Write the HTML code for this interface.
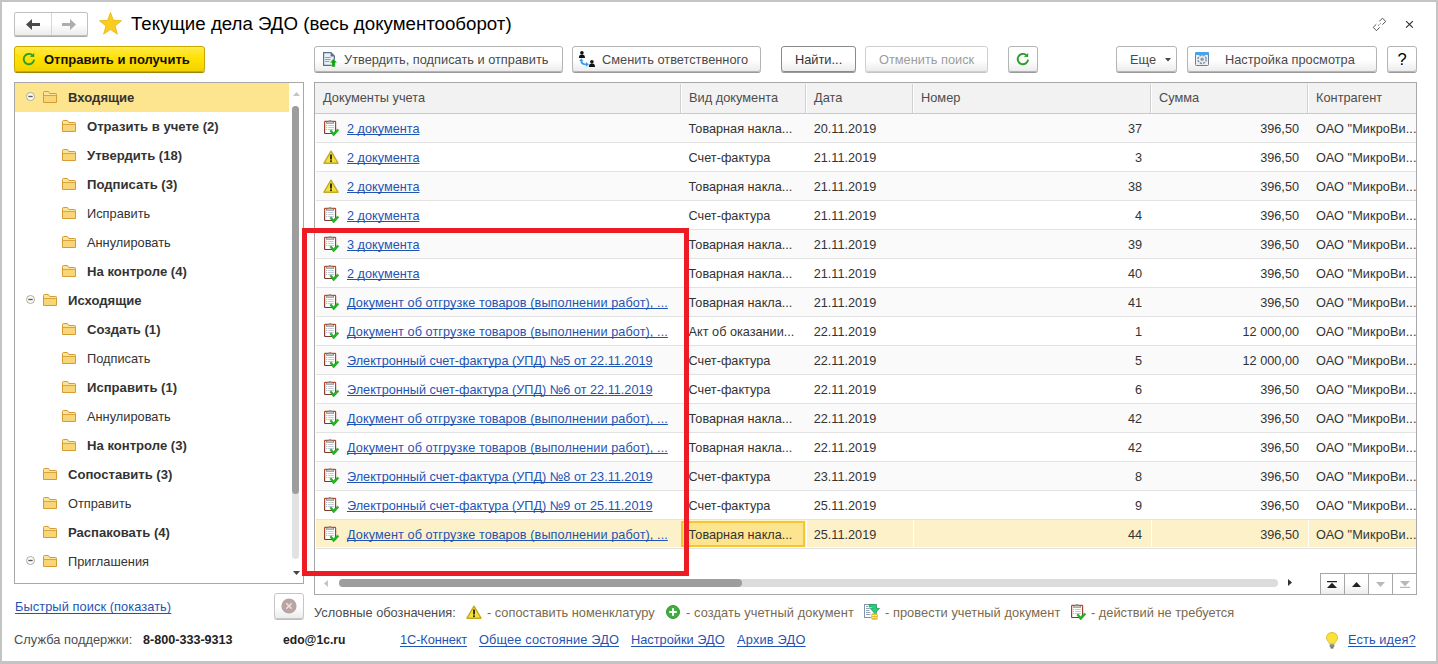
<!DOCTYPE html>
<html lang="ru"><head><meta charset="utf-8"><title>Текущие дела ЭДО</title>
<style>
*{box-sizing:border-box;margin:0;padding:0}
html,body{width:1438px;height:664px;overflow:hidden;background:#fff}
body{font-family:"Liberation Sans",sans-serif;font-size:12.8px;color:#333;position:relative}
.abs{position:absolute;white-space:nowrap}
.frame{position:absolute;left:0;top:0;width:1438px;height:664px;border-style:solid;border-color:#c4c4c4;border-width:2px 2px 3px 2px;z-index:50;pointer-events:none}
.btn{position:absolute;top:46px;height:26px;border:1px solid #b4b4b4;border-radius:3px;background:linear-gradient(#ffffff,#ffffff 55%,#ececec);box-shadow:0 1px 0 #9a9a9a;color:#4a4a4a;line-height:26px;white-space:nowrap}
.btn span{position:absolute;top:0}
.t{position:absolute;left:0;width:274px;height:29px;line-height:29px;white-space:nowrap}
.t b,.t i{position:absolute;top:0;font-style:normal}
.t b{font-weight:bold;font-size:13.1px}
.row{position:absolute;left:1px;width:1101px;height:29px;border-bottom:1px solid #e2e2e2;line-height:30px;font-size:12.7px}
.row.odd{background:#fafafa}
.row span{position:absolute;top:0;white-space:nowrap}
.row a{position:absolute;top:0;left:31px;color:#1f54b4;text-decoration:underline;text-decoration-skip-ink:none;text-underline-offset:1px;text-decoration-thickness:1px;white-space:nowrap}
.lk{color:#1f54b4;text-decoration:underline;text-decoration-skip-ink:none;text-underline-offset:2px;text-decoration-thickness:1px}
.num{text-align:right}
.hd{position:absolute;top:0;height:30px;line-height:29px;color:#4d4d4d;white-space:nowrap}
.sep{position:absolute;top:1px;width:2px;height:29px;border-left:1px solid #d0d0d0;background:#fff}
svg{position:absolute;overflow:visible}
</style></head>
<body>
<div class="frame"></div>
<svg width="0" height="0" style="left:0;top:0"><defs><linearGradient id="bg" x1="0" y1="0" x2="0" y2="1"><stop offset="0" stop-color="#bb4a26"/><stop offset="1" stop-color="#7a3a33"/></linearGradient></defs></svg>
<div class="abs" style="left:14px;top:12px;width:74px;height:24px;border:1px solid #c0c0c0;border-radius:2px;background:linear-gradient(#fff,#fff 50%,#ececec);box-shadow:0 1px 0 #aaa"></div>
<div class="abs" style="left:51px;top:13px;width:1px;height:22px;background:#d6d6d6"></div>
<svg style="left:25px;top:18px" width="16" height="13" viewBox="0 0 16 13"><path d="M1 6.5 L7 1 L7 5 L15 5 L15 8 L7 8 L7 12 Z" fill="#4a4a4a"/></svg>
<svg style="left:61px;top:18px" width="16" height="13" viewBox="0 0 16 13"><path d="M15 6.5 L9 1 L9 5 L1 5 L1 8 L9 8 L9 12 Z" fill="#adadad"/></svg>
<svg style="left:99px;top:12px" width="23" height="23" viewBox="0 0 24 23" preserveAspectRatio="none"><path d="M12 0.5 L15 8.3 L23.5 8.7 L16.8 14 L19.2 22.2 L12 17.5 L4.8 22.2 L7.2 14 L0.5 8.7 L9 8.3 Z" fill="#f9cc1d" stroke="#e9b50d" stroke-width="0.8"/></svg>
<div class="abs" style="left:131px;top:12px;font-size:18.7px;line-height:24px;color:#000">Текущие дела ЭДО (весь документооборот)</div>
<svg style="left:1370px;top:15px" width="20" height="20" viewBox="0 0 20 20"><g fill="none" stroke="#555" stroke-width="1"><path d="M6.3 9.3 L3.2 12.3 L6.5 15.7 L9.7 12.3"/><path d="M9.3 6.4 L12.4 3.2 L15.8 6.4 L12.4 9.6"/><path d="M8.2 10.6 L10.8 8.3" stroke-dasharray="1.2 0.8"/></g></svg>
<svg style="left:1405px;top:20px" width="9" height="9" viewBox="0 0 9 9"><path d="M1.1 1.2 L7.8 7.7 M7.8 1.2 L1.1 7.7" stroke="#2e2e2e" stroke-width="1.15" fill="none"/></svg>
<div class="abs" style="left:14px;top:46px;width:191px;height:26px;border:1px solid #c9a800;border-radius:3px;background:linear-gradient(#ffe94a,#ffe100 50%,#f2d200);box-shadow:0 1px 0 #9c8600"></div>
<svg style="left:22px;top:52px" width="14" height="14" viewBox="0 0 14 14"><path d="M10.24 3.12 A5.2 5.2 0 1 0 12.08 7.55" fill="none" stroke="#27a027" stroke-width="1.9"/><path d="M12.2 1.1 V5.1 L7.8 4.8 Z" fill="#27a027"/></svg>
<div class="abs" style="left:44px;top:46px;line-height:28px;font-size:13px;font-weight:bold;color:#111">Отправить и получить</div>
<div class="btn" style="left:314px;width:249px;"><svg style="left:8px;top:5px" width="15" height="15" viewBox="0 0 15 15"><path d="M0.6 0.6 H8 L11.4 4 V13.4 H0.6 Z" fill="#e8f0f8" stroke="#5f6f86" stroke-width="1.2"/><path d="M7.6 0.6 V4.4 H11.4 Z" fill="#5f6f86"/><path d="M2.1 5.5 H7.6 M2.1 7.5 H7.6 M2.1 9.5 H6.4" stroke="#8f9db0" stroke-width="1"/><path d="M10.5 6.6 L14.2 10.8 H12.2 V14.9 H8.8 V10.8 H6.8 Z" fill="#12a012" stroke="#fff" stroke-width="0.4"/></svg><span style="left:29px">Утвердить, подписать и отправить</span></div>
<div class="btn" style="left:572px;width:189px;"><svg style="left:5px;top:4px" width="18" height="17" viewBox="0 0 18 17"><circle cx="3.9" cy="1.8" r="1.8" fill="#111"/><path d="M0.8 6.9 Q0.8 4 3 3.6 H4.8 Q7.1 4 7.1 6.9 Z" fill="#111"/><circle cx="13.9" cy="10.7" r="1.8" fill="#111"/><path d="M10.8 15.9 Q10.8 13 13 12.6 H14.8 Q17.1 13 17.1 15.9 Z" fill="#111"/><path d="M3.3 9.4 Q3.4 13.4 8.3 13.4" fill="none" stroke="#3b9bf0" stroke-width="1.8"/><path d="M3.3 7.2 L5.4 9.9 H1.2 Z" fill="#3b9bf0"/><path d="M10.9 13.4 L8 11.1 V15.8 Z" fill="#3b9bf0"/></svg><span style="left:29px">Сменить ответственного</span></div>
<div class="btn" style="left:781px;width:75px;border-color:#8a8a8a;color:#333"><span style="left:13px">Найти...</span></div>
<div class="btn" style="left:865px;width:123px;border-color:#cfcfcf;box-shadow:0 1px 0 #c4c4c4"><span style="left:13px;color:#9c9c9c">Отменить поиск</span></div>
<div class="btn" style="left:1008px;width:30px;"><svg style="left:7px;top:5px" width="14" height="14" viewBox="0 0 14 14"><path d="M10.24 3.12 A5.2 5.2 0 1 0 12.08 7.55" fill="none" stroke="#27a027" stroke-width="1.9"/><path d="M12.2 1.1 V5.1 L7.8 4.8 Z" fill="#27a027"/></svg></div>
<div class="btn" style="left:1116px;width:61px;"><span style="left:13px">Еще</span><svg style="left:48px;top:11px" width="6" height="4" viewBox="0 0 6 4"><path d="M0 0 H6 L3 3.5 Z" fill="#444"/></svg></div>
<div class="btn" style="left:1187px;width:190px;"><svg style="left:7px;top:5px" width="14" height="14" viewBox="0 0 14 14"><rect x="0.5" y="0.5" width="13" height="13" rx="1" fill="#eceff2" stroke="#6b7f96"/><path d="M0 3 V1.2 Q0 0 1.2 0 H12.8 Q14 0 14 1.2 V3 Z" fill="#46a3ee"/><circle cx="7.1" cy="7.3" r="4.1" fill="none" stroke="#8593a1" stroke-width="1.5" stroke-dasharray="2.2 1"/><circle cx="7.1" cy="7.3" r="1.7" fill="#8c99a6"/></svg><span style="left:37px">Настройка просмотра</span></div>
<div class="btn" style="left:1387px;width:30px;"><span style="left:0;width:28px;text-align:center;font-size:16.5px;line-height:24px;color:#000">?</span></div>
<div class="abs" style="left:14px;top:82px;width:290px;height:502px;border:1px solid #a8a8a8;background:#fff">
<div class="abs" style="left:0;top:0;width:274px;height:29px;background:#fde48e"></div>
<div class="t" style="top:0px"><svg style="left:10px;top:8px" width="11" height="11" viewBox="0 0 11 11"><circle cx="5.5" cy="5.5" r="4" fill="#fffdf4" stroke="#a3a3a3" stroke-width="0.9"/><path d="M3.3 5.5 H7.7" stroke="#5a5a5a" stroke-width="1.4"/></svg><svg style="left:28px;top:8px" width="14" height="12" viewBox="0 0 14 12"><path d="M0.5 11.5 V1.5 Q0.5 0.5 1.5 0.5 H5 Q5.8 0.5 6.2 1.3 L6.8 2.5 H12.7 Q13.5 2.5 13.5 3.3 V11.5 Z" fill="#fbe39a" stroke="#d59c33"/><rect x="1" y="5" width="12" height="6" fill="#f8d678"/><path d="M1 4.5 H13" stroke="#d9a540" stroke-width="1"/></svg><b style="left:53px">Входящие</b></div>
<div class="t" style="top:29px"><svg style="left:47px;top:8px" width="14" height="12" viewBox="0 0 14 12"><path d="M0.5 11.5 V1.5 Q0.5 0.5 1.5 0.5 H5 Q5.8 0.5 6.2 1.3 L6.8 2.5 H12.7 Q13.5 2.5 13.5 3.3 V11.5 Z" fill="#fbe39a" stroke="#d59c33"/><rect x="1" y="5" width="12" height="6" fill="#f8d678"/><path d="M1 4.5 H13" stroke="#d9a540" stroke-width="1"/></svg><b style="left:72px">Отразить в учете (2)</b></div>
<div class="t" style="top:58px"><svg style="left:47px;top:8px" width="14" height="12" viewBox="0 0 14 12"><path d="M0.5 11.5 V1.5 Q0.5 0.5 1.5 0.5 H5 Q5.8 0.5 6.2 1.3 L6.8 2.5 H12.7 Q13.5 2.5 13.5 3.3 V11.5 Z" fill="#fbe39a" stroke="#d59c33"/><rect x="1" y="5" width="12" height="6" fill="#f8d678"/><path d="M1 4.5 H13" stroke="#d9a540" stroke-width="1"/></svg><b style="left:72px">Утвердить (18)</b></div>
<div class="t" style="top:87px"><svg style="left:47px;top:8px" width="14" height="12" viewBox="0 0 14 12"><path d="M0.5 11.5 V1.5 Q0.5 0.5 1.5 0.5 H5 Q5.8 0.5 6.2 1.3 L6.8 2.5 H12.7 Q13.5 2.5 13.5 3.3 V11.5 Z" fill="#fbe39a" stroke="#d59c33"/><rect x="1" y="5" width="12" height="6" fill="#f8d678"/><path d="M1 4.5 H13" stroke="#d9a540" stroke-width="1"/></svg><b style="left:72px">Подписать (3)</b></div>
<div class="t" style="top:116px"><svg style="left:47px;top:8px" width="14" height="12" viewBox="0 0 14 12"><path d="M0.5 11.5 V1.5 Q0.5 0.5 1.5 0.5 H5 Q5.8 0.5 6.2 1.3 L6.8 2.5 H12.7 Q13.5 2.5 13.5 3.3 V11.5 Z" fill="#fbe39a" stroke="#d59c33"/><rect x="1" y="5" width="12" height="6" fill="#f8d678"/><path d="M1 4.5 H13" stroke="#d9a540" stroke-width="1"/></svg><i style="left:72px">Исправить</i></div>
<div class="t" style="top:145px"><svg style="left:47px;top:8px" width="14" height="12" viewBox="0 0 14 12"><path d="M0.5 11.5 V1.5 Q0.5 0.5 1.5 0.5 H5 Q5.8 0.5 6.2 1.3 L6.8 2.5 H12.7 Q13.5 2.5 13.5 3.3 V11.5 Z" fill="#fbe39a" stroke="#d59c33"/><rect x="1" y="5" width="12" height="6" fill="#f8d678"/><path d="M1 4.5 H13" stroke="#d9a540" stroke-width="1"/></svg><i style="left:72px">Аннулировать</i></div>
<div class="t" style="top:174px"><svg style="left:47px;top:8px" width="14" height="12" viewBox="0 0 14 12"><path d="M0.5 11.5 V1.5 Q0.5 0.5 1.5 0.5 H5 Q5.8 0.5 6.2 1.3 L6.8 2.5 H12.7 Q13.5 2.5 13.5 3.3 V11.5 Z" fill="#fbe39a" stroke="#d59c33"/><rect x="1" y="5" width="12" height="6" fill="#f8d678"/><path d="M1 4.5 H13" stroke="#d9a540" stroke-width="1"/></svg><b style="left:72px">На контроле (4)</b></div>
<div class="t" style="top:203px"><svg style="left:10px;top:8px" width="11" height="11" viewBox="0 0 11 11"><circle cx="5.5" cy="5.5" r="4" fill="#fffdf4" stroke="#a3a3a3" stroke-width="0.9"/><path d="M3.3 5.5 H7.7" stroke="#5a5a5a" stroke-width="1.4"/></svg><svg style="left:28px;top:8px" width="14" height="12" viewBox="0 0 14 12"><path d="M0.5 11.5 V1.5 Q0.5 0.5 1.5 0.5 H5 Q5.8 0.5 6.2 1.3 L6.8 2.5 H12.7 Q13.5 2.5 13.5 3.3 V11.5 Z" fill="#fbe39a" stroke="#d59c33"/><rect x="1" y="5" width="12" height="6" fill="#f8d678"/><path d="M1 4.5 H13" stroke="#d9a540" stroke-width="1"/></svg><b style="left:53px">Исходящие</b></div>
<div class="t" style="top:232px"><svg style="left:47px;top:8px" width="14" height="12" viewBox="0 0 14 12"><path d="M0.5 11.5 V1.5 Q0.5 0.5 1.5 0.5 H5 Q5.8 0.5 6.2 1.3 L6.8 2.5 H12.7 Q13.5 2.5 13.5 3.3 V11.5 Z" fill="#fbe39a" stroke="#d59c33"/><rect x="1" y="5" width="12" height="6" fill="#f8d678"/><path d="M1 4.5 H13" stroke="#d9a540" stroke-width="1"/></svg><b style="left:72px">Создать (1)</b></div>
<div class="t" style="top:261px"><svg style="left:47px;top:8px" width="14" height="12" viewBox="0 0 14 12"><path d="M0.5 11.5 V1.5 Q0.5 0.5 1.5 0.5 H5 Q5.8 0.5 6.2 1.3 L6.8 2.5 H12.7 Q13.5 2.5 13.5 3.3 V11.5 Z" fill="#fbe39a" stroke="#d59c33"/><rect x="1" y="5" width="12" height="6" fill="#f8d678"/><path d="M1 4.5 H13" stroke="#d9a540" stroke-width="1"/></svg><i style="left:72px">Подписать</i></div>
<div class="t" style="top:290px"><svg style="left:47px;top:8px" width="14" height="12" viewBox="0 0 14 12"><path d="M0.5 11.5 V1.5 Q0.5 0.5 1.5 0.5 H5 Q5.8 0.5 6.2 1.3 L6.8 2.5 H12.7 Q13.5 2.5 13.5 3.3 V11.5 Z" fill="#fbe39a" stroke="#d59c33"/><rect x="1" y="5" width="12" height="6" fill="#f8d678"/><path d="M1 4.5 H13" stroke="#d9a540" stroke-width="1"/></svg><b style="left:72px">Исправить (1)</b></div>
<div class="t" style="top:319px"><svg style="left:47px;top:8px" width="14" height="12" viewBox="0 0 14 12"><path d="M0.5 11.5 V1.5 Q0.5 0.5 1.5 0.5 H5 Q5.8 0.5 6.2 1.3 L6.8 2.5 H12.7 Q13.5 2.5 13.5 3.3 V11.5 Z" fill="#fbe39a" stroke="#d59c33"/><rect x="1" y="5" width="12" height="6" fill="#f8d678"/><path d="M1 4.5 H13" stroke="#d9a540" stroke-width="1"/></svg><i style="left:72px">Аннулировать</i></div>
<div class="t" style="top:348px"><svg style="left:47px;top:8px" width="14" height="12" viewBox="0 0 14 12"><path d="M0.5 11.5 V1.5 Q0.5 0.5 1.5 0.5 H5 Q5.8 0.5 6.2 1.3 L6.8 2.5 H12.7 Q13.5 2.5 13.5 3.3 V11.5 Z" fill="#fbe39a" stroke="#d59c33"/><rect x="1" y="5" width="12" height="6" fill="#f8d678"/><path d="M1 4.5 H13" stroke="#d9a540" stroke-width="1"/></svg><b style="left:72px">На контроле (3)</b></div>
<div class="t" style="top:377px"><svg style="left:28px;top:8px" width="14" height="12" viewBox="0 0 14 12"><path d="M0.5 11.5 V1.5 Q0.5 0.5 1.5 0.5 H5 Q5.8 0.5 6.2 1.3 L6.8 2.5 H12.7 Q13.5 2.5 13.5 3.3 V11.5 Z" fill="#fbe39a" stroke="#d59c33"/><rect x="1" y="5" width="12" height="6" fill="#f8d678"/><path d="M1 4.5 H13" stroke="#d9a540" stroke-width="1"/></svg><b style="left:53px">Сопоставить (3)</b></div>
<div class="t" style="top:406px"><svg style="left:28px;top:8px" width="14" height="12" viewBox="0 0 14 12"><path d="M0.5 11.5 V1.5 Q0.5 0.5 1.5 0.5 H5 Q5.8 0.5 6.2 1.3 L6.8 2.5 H12.7 Q13.5 2.5 13.5 3.3 V11.5 Z" fill="#fbe39a" stroke="#d59c33"/><rect x="1" y="5" width="12" height="6" fill="#f8d678"/><path d="M1 4.5 H13" stroke="#d9a540" stroke-width="1"/></svg><i style="left:53px">Отправить</i></div>
<div class="t" style="top:435px"><svg style="left:28px;top:8px" width="14" height="12" viewBox="0 0 14 12"><path d="M0.5 11.5 V1.5 Q0.5 0.5 1.5 0.5 H5 Q5.8 0.5 6.2 1.3 L6.8 2.5 H12.7 Q13.5 2.5 13.5 3.3 V11.5 Z" fill="#fbe39a" stroke="#d59c33"/><rect x="1" y="5" width="12" height="6" fill="#f8d678"/><path d="M1 4.5 H13" stroke="#d9a540" stroke-width="1"/></svg><b style="left:53px">Распаковать (4)</b></div>
<div class="t" style="top:464px"><svg style="left:10px;top:8px" width="11" height="11" viewBox="0 0 11 11"><circle cx="5.5" cy="5.5" r="4" fill="#fffdf4" stroke="#a3a3a3" stroke-width="0.9"/><path d="M3.3 5.5 H7.7" stroke="#5a5a5a" stroke-width="1.4"/></svg><svg style="left:28px;top:8px" width="14" height="12" viewBox="0 0 14 12"><path d="M0.5 11.5 V1.5 Q0.5 0.5 1.5 0.5 H5 Q5.8 0.5 6.2 1.3 L6.8 2.5 H12.7 Q13.5 2.5 13.5 3.3 V11.5 Z" fill="#fbe39a" stroke="#d59c33"/><rect x="1" y="5" width="12" height="6" fill="#f8d678"/><path d="M1 4.5 H13" stroke="#d9a540" stroke-width="1"/></svg><i style="left:53px">Приглашения</i></div>
<svg style="left:277.5px;top:9px" width="7" height="4" viewBox="0 0 7 4"><path d="M3.5 0 L7 4 H0 Z" fill="#c4c4c4"/></svg>
<div class="abs" style="left:277px;top:23px;width:7px;height:453px;background:#e2e2e2;border-radius:4px"></div>
<div class="abs" style="left:277px;top:23px;width:7px;height:388px;background:#9d9d9d;border-radius:4px"></div>
<svg style="left:277.5px;top:488px" width="7" height="4" viewBox="0 0 7 4"><path d="M3.5 4 L7 0 H0 Z" fill="#444"/></svg>
</div>
<div class="abs" style="left:314px;top:82px;width:1103px;height:513px;border:1px solid #a8a8a8;background:#fff;overflow:hidden">
<div class="abs" style="left:0;top:0;width:1101px;height:31px;background:#f2f2f2;border-bottom:1px solid #c9c9c9"></div>
<div class="hd" style="left:8px">Документы учета</div>
<div class="sep" style="left:365px"></div>
<div class="hd" style="left:374px">Вид документа</div>
<div class="sep" style="left:490px"></div>
<div class="hd" style="left:499px">Дата</div>
<div class="sep" style="left:597px"></div>
<div class="hd" style="left:606px">Номер</div>
<div class="sep" style="left:835px"></div>
<div class="hd" style="left:844px">Сумма</div>
<div class="sep" style="left:992px"></div>
<div class="hd" style="left:1001px">Контрагент</div>
<div class="row odd" style="top:31px"><svg style="left:8px;top:6px" width="16" height="17" viewBox="0 0 16 17"><rect x="0.6" y="1.4" width="11" height="12.1" rx="0.5" fill="#fff" stroke="url(#bg)" stroke-width="1.2"/><path d="M2.1 3.7 V1.8 H4.2 Q4.4 0 6 0 Q7.7 0 7.9 1.8 H10 V3.7 Z" fill="#8e8e8e"/><path d="M3 2.5 H9" stroke="#c4c4c4" stroke-width="1"/><path d="M2.2 5.5 H3.2 M2.2 7.5 H3.2 M2.2 9.5 H3.2" stroke="#9fb0c0" stroke-width="1"/><path d="M4.2 5.5 H9.8 M4.2 7.5 H9.8 M4.2 9.5 H9.8" stroke="#c3cad2" stroke-width="1"/><path d="M5.9 10.9 L7.3 9.9 L9.4 12.7 L13.3 9.2 L14.9 10.2 L9.6 16 Z" fill="#22b822" stroke="#0f8f0f" stroke-width="0.5" stroke-linejoin="round"/></svg><a>2 документа</a><span style="left:372.6px">Товарная накла...</span><span style="left:497.7px">20.11.2019</span><span class="num" style="left:598px;width:228px">37</span><span class="num" style="left:835px;width:148px">396,50</span><span style="left:1000px;letter-spacing:0.1px">ОАО "МикроВи...</span></div>
<div class="row" style="top:60px"><svg style="left:7px;top:7px" width="16" height="15" viewBox="0 0 16 15"><path d="M8 1.2 L15 13.2 H1 Z" fill="#f5e13c" stroke="#c4aa22" stroke-width="1.4" stroke-linejoin="round"/><path d="M8 4.4 V9.4" stroke="#2a2a10" stroke-width="1.9"/><rect x="7.1" y="10.3" width="1.8" height="1.8" fill="#2a2a10"/></svg><a>2 документа</a><span style="left:372.6px">Счет-фактура</span><span style="left:497.7px">21.11.2019</span><span class="num" style="left:598px;width:228px">3</span><span class="num" style="left:835px;width:148px">396,50</span><span style="left:1000px;letter-spacing:0.1px">ОАО "МикроВи...</span></div>
<div class="row odd" style="top:89px"><svg style="left:7px;top:7px" width="16" height="15" viewBox="0 0 16 15"><path d="M8 1.2 L15 13.2 H1 Z" fill="#f5e13c" stroke="#c4aa22" stroke-width="1.4" stroke-linejoin="round"/><path d="M8 4.4 V9.4" stroke="#2a2a10" stroke-width="1.9"/><rect x="7.1" y="10.3" width="1.8" height="1.8" fill="#2a2a10"/></svg><a>2 документа</a><span style="left:372.6px">Товарная накла...</span><span style="left:497.7px">21.11.2019</span><span class="num" style="left:598px;width:228px">38</span><span class="num" style="left:835px;width:148px">396,50</span><span style="left:1000px;letter-spacing:0.1px">ОАО "МикроВи...</span></div>
<div class="row" style="top:118px"><svg style="left:8px;top:6px" width="16" height="17" viewBox="0 0 16 17"><rect x="0.6" y="1.4" width="11" height="12.1" rx="0.5" fill="#fff" stroke="url(#bg)" stroke-width="1.2"/><path d="M2.1 3.7 V1.8 H4.2 Q4.4 0 6 0 Q7.7 0 7.9 1.8 H10 V3.7 Z" fill="#8e8e8e"/><path d="M3 2.5 H9" stroke="#c4c4c4" stroke-width="1"/><path d="M2.2 5.5 H3.2 M2.2 7.5 H3.2 M2.2 9.5 H3.2" stroke="#9fb0c0" stroke-width="1"/><path d="M4.2 5.5 H9.8 M4.2 7.5 H9.8 M4.2 9.5 H9.8" stroke="#c3cad2" stroke-width="1"/><path d="M5.9 10.9 L7.3 9.9 L9.4 12.7 L13.3 9.2 L14.9 10.2 L9.6 16 Z" fill="#22b822" stroke="#0f8f0f" stroke-width="0.5" stroke-linejoin="round"/></svg><a>2 документа</a><span style="left:372.6px">Счет-фактура</span><span style="left:497.7px">21.11.2019</span><span class="num" style="left:598px;width:228px">4</span><span class="num" style="left:835px;width:148px">396,50</span><span style="left:1000px;letter-spacing:0.1px">ОАО "МикроВи...</span></div>
<div class="row odd" style="top:147px"><svg style="left:8px;top:6px" width="16" height="17" viewBox="0 0 16 17"><rect x="0.6" y="1.4" width="11" height="12.1" rx="0.5" fill="#fff" stroke="url(#bg)" stroke-width="1.2"/><path d="M2.1 3.7 V1.8 H4.2 Q4.4 0 6 0 Q7.7 0 7.9 1.8 H10 V3.7 Z" fill="#8e8e8e"/><path d="M3 2.5 H9" stroke="#c4c4c4" stroke-width="1"/><path d="M2.2 5.5 H3.2 M2.2 7.5 H3.2 M2.2 9.5 H3.2" stroke="#9fb0c0" stroke-width="1"/><path d="M4.2 5.5 H9.8 M4.2 7.5 H9.8 M4.2 9.5 H9.8" stroke="#c3cad2" stroke-width="1"/><path d="M5.9 10.9 L7.3 9.9 L9.4 12.7 L13.3 9.2 L14.9 10.2 L9.6 16 Z" fill="#22b822" stroke="#0f8f0f" stroke-width="0.5" stroke-linejoin="round"/></svg><a>3 документа</a><span style="left:372.6px">Товарная накла...</span><span style="left:497.7px">21.11.2019</span><span class="num" style="left:598px;width:228px">39</span><span class="num" style="left:835px;width:148px">396,50</span><span style="left:1000px;letter-spacing:0.1px">ОАО "МикроВи...</span></div>
<div class="row" style="top:176px"><svg style="left:8px;top:6px" width="16" height="17" viewBox="0 0 16 17"><rect x="0.6" y="1.4" width="11" height="12.1" rx="0.5" fill="#fff" stroke="url(#bg)" stroke-width="1.2"/><path d="M2.1 3.7 V1.8 H4.2 Q4.4 0 6 0 Q7.7 0 7.9 1.8 H10 V3.7 Z" fill="#8e8e8e"/><path d="M3 2.5 H9" stroke="#c4c4c4" stroke-width="1"/><path d="M2.2 5.5 H3.2 M2.2 7.5 H3.2 M2.2 9.5 H3.2" stroke="#9fb0c0" stroke-width="1"/><path d="M4.2 5.5 H9.8 M4.2 7.5 H9.8 M4.2 9.5 H9.8" stroke="#c3cad2" stroke-width="1"/><path d="M5.9 10.9 L7.3 9.9 L9.4 12.7 L13.3 9.2 L14.9 10.2 L9.6 16 Z" fill="#22b822" stroke="#0f8f0f" stroke-width="0.5" stroke-linejoin="round"/></svg><a>2 документа</a><span style="left:372.6px">Товарная накла...</span><span style="left:497.7px">21.11.2019</span><span class="num" style="left:598px;width:228px">40</span><span class="num" style="left:835px;width:148px">396,50</span><span style="left:1000px;letter-spacing:0.1px">ОАО "МикроВи...</span></div>
<div class="row odd" style="top:205px"><svg style="left:8px;top:6px" width="16" height="17" viewBox="0 0 16 17"><rect x="0.6" y="1.4" width="11" height="12.1" rx="0.5" fill="#fff" stroke="url(#bg)" stroke-width="1.2"/><path d="M2.1 3.7 V1.8 H4.2 Q4.4 0 6 0 Q7.7 0 7.9 1.8 H10 V3.7 Z" fill="#8e8e8e"/><path d="M3 2.5 H9" stroke="#c4c4c4" stroke-width="1"/><path d="M2.2 5.5 H3.2 M2.2 7.5 H3.2 M2.2 9.5 H3.2" stroke="#9fb0c0" stroke-width="1"/><path d="M4.2 5.5 H9.8 M4.2 7.5 H9.8 M4.2 9.5 H9.8" stroke="#c3cad2" stroke-width="1"/><path d="M5.9 10.9 L7.3 9.9 L9.4 12.7 L13.3 9.2 L14.9 10.2 L9.6 16 Z" fill="#22b822" stroke="#0f8f0f" stroke-width="0.5" stroke-linejoin="round"/></svg><a style="letter-spacing:0.08px">Документ об отгрузке товаров (выполнении работ), ...</a><span style="left:372.6px">Товарная накла...</span><span style="left:497.7px">21.11.2019</span><span class="num" style="left:598px;width:228px">41</span><span class="num" style="left:835px;width:148px">396,50</span><span style="left:1000px;letter-spacing:0.1px">ОАО "МикроВи...</span></div>
<div class="row" style="top:234px"><svg style="left:8px;top:6px" width="16" height="17" viewBox="0 0 16 17"><rect x="0.6" y="1.4" width="11" height="12.1" rx="0.5" fill="#fff" stroke="url(#bg)" stroke-width="1.2"/><path d="M2.1 3.7 V1.8 H4.2 Q4.4 0 6 0 Q7.7 0 7.9 1.8 H10 V3.7 Z" fill="#8e8e8e"/><path d="M3 2.5 H9" stroke="#c4c4c4" stroke-width="1"/><path d="M2.2 5.5 H3.2 M2.2 7.5 H3.2 M2.2 9.5 H3.2" stroke="#9fb0c0" stroke-width="1"/><path d="M4.2 5.5 H9.8 M4.2 7.5 H9.8 M4.2 9.5 H9.8" stroke="#c3cad2" stroke-width="1"/><path d="M5.9 10.9 L7.3 9.9 L9.4 12.7 L13.3 9.2 L14.9 10.2 L9.6 16 Z" fill="#22b822" stroke="#0f8f0f" stroke-width="0.5" stroke-linejoin="round"/></svg><a style="letter-spacing:0.08px">Документ об отгрузке товаров (выполнении работ), ...</a><span style="left:372.6px">Акт об оказании...</span><span style="left:497.7px">22.11.2019</span><span class="num" style="left:598px;width:228px">1</span><span class="num" style="left:835px;width:148px">12 000,00</span><span style="left:1000px;letter-spacing:0.1px">ОАО "МикроВи...</span></div>
<div class="row odd" style="top:263px"><svg style="left:8px;top:6px" width="16" height="17" viewBox="0 0 16 17"><rect x="0.6" y="1.4" width="11" height="12.1" rx="0.5" fill="#fff" stroke="url(#bg)" stroke-width="1.2"/><path d="M2.1 3.7 V1.8 H4.2 Q4.4 0 6 0 Q7.7 0 7.9 1.8 H10 V3.7 Z" fill="#8e8e8e"/><path d="M3 2.5 H9" stroke="#c4c4c4" stroke-width="1"/><path d="M2.2 5.5 H3.2 M2.2 7.5 H3.2 M2.2 9.5 H3.2" stroke="#9fb0c0" stroke-width="1"/><path d="M4.2 5.5 H9.8 M4.2 7.5 H9.8 M4.2 9.5 H9.8" stroke="#c3cad2" stroke-width="1"/><path d="M5.9 10.9 L7.3 9.9 L9.4 12.7 L13.3 9.2 L14.9 10.2 L9.6 16 Z" fill="#22b822" stroke="#0f8f0f" stroke-width="0.5" stroke-linejoin="round"/></svg><a>Электронный счет-фактура (УПД) №5 от 22.11.2019</a><span style="left:372.6px">Счет-фактура</span><span style="left:497.7px">22.11.2019</span><span class="num" style="left:598px;width:228px">5</span><span class="num" style="left:835px;width:148px">12 000,00</span><span style="left:1000px;letter-spacing:0.1px">ОАО "МикроВи...</span></div>
<div class="row" style="top:292px"><svg style="left:8px;top:6px" width="16" height="17" viewBox="0 0 16 17"><rect x="0.6" y="1.4" width="11" height="12.1" rx="0.5" fill="#fff" stroke="url(#bg)" stroke-width="1.2"/><path d="M2.1 3.7 V1.8 H4.2 Q4.4 0 6 0 Q7.7 0 7.9 1.8 H10 V3.7 Z" fill="#8e8e8e"/><path d="M3 2.5 H9" stroke="#c4c4c4" stroke-width="1"/><path d="M2.2 5.5 H3.2 M2.2 7.5 H3.2 M2.2 9.5 H3.2" stroke="#9fb0c0" stroke-width="1"/><path d="M4.2 5.5 H9.8 M4.2 7.5 H9.8 M4.2 9.5 H9.8" stroke="#c3cad2" stroke-width="1"/><path d="M5.9 10.9 L7.3 9.9 L9.4 12.7 L13.3 9.2 L14.9 10.2 L9.6 16 Z" fill="#22b822" stroke="#0f8f0f" stroke-width="0.5" stroke-linejoin="round"/></svg><a>Электронный счет-фактура (УПД) №6 от 22.11.2019</a><span style="left:372.6px">Счет-фактура</span><span style="left:497.7px">22.11.2019</span><span class="num" style="left:598px;width:228px">6</span><span class="num" style="left:835px;width:148px">396,50</span><span style="left:1000px;letter-spacing:0.1px">ОАО "МикроВи...</span></div>
<div class="row odd" style="top:321px"><svg style="left:8px;top:6px" width="16" height="17" viewBox="0 0 16 17"><rect x="0.6" y="1.4" width="11" height="12.1" rx="0.5" fill="#fff" stroke="url(#bg)" stroke-width="1.2"/><path d="M2.1 3.7 V1.8 H4.2 Q4.4 0 6 0 Q7.7 0 7.9 1.8 H10 V3.7 Z" fill="#8e8e8e"/><path d="M3 2.5 H9" stroke="#c4c4c4" stroke-width="1"/><path d="M2.2 5.5 H3.2 M2.2 7.5 H3.2 M2.2 9.5 H3.2" stroke="#9fb0c0" stroke-width="1"/><path d="M4.2 5.5 H9.8 M4.2 7.5 H9.8 M4.2 9.5 H9.8" stroke="#c3cad2" stroke-width="1"/><path d="M5.9 10.9 L7.3 9.9 L9.4 12.7 L13.3 9.2 L14.9 10.2 L9.6 16 Z" fill="#22b822" stroke="#0f8f0f" stroke-width="0.5" stroke-linejoin="round"/></svg><a style="letter-spacing:0.08px">Документ об отгрузке товаров (выполнении работ), ...</a><span style="left:372.6px">Товарная накла...</span><span style="left:497.7px">22.11.2019</span><span class="num" style="left:598px;width:228px">42</span><span class="num" style="left:835px;width:148px">396,50</span><span style="left:1000px;letter-spacing:0.1px">ОАО "МикроВи...</span></div>
<div class="row" style="top:350px"><svg style="left:8px;top:6px" width="16" height="17" viewBox="0 0 16 17"><rect x="0.6" y="1.4" width="11" height="12.1" rx="0.5" fill="#fff" stroke="url(#bg)" stroke-width="1.2"/><path d="M2.1 3.7 V1.8 H4.2 Q4.4 0 6 0 Q7.7 0 7.9 1.8 H10 V3.7 Z" fill="#8e8e8e"/><path d="M3 2.5 H9" stroke="#c4c4c4" stroke-width="1"/><path d="M2.2 5.5 H3.2 M2.2 7.5 H3.2 M2.2 9.5 H3.2" stroke="#9fb0c0" stroke-width="1"/><path d="M4.2 5.5 H9.8 M4.2 7.5 H9.8 M4.2 9.5 H9.8" stroke="#c3cad2" stroke-width="1"/><path d="M5.9 10.9 L7.3 9.9 L9.4 12.7 L13.3 9.2 L14.9 10.2 L9.6 16 Z" fill="#22b822" stroke="#0f8f0f" stroke-width="0.5" stroke-linejoin="round"/></svg><a style="letter-spacing:0.08px">Документ об отгрузке товаров (выполнении работ), ...</a><span style="left:372.6px">Товарная накла...</span><span style="left:497.7px">22.11.2019</span><span class="num" style="left:598px;width:228px">42</span><span class="num" style="left:835px;width:148px">396,50</span><span style="left:1000px;letter-spacing:0.1px">ОАО "МикроВи...</span></div>
<div class="row odd" style="top:379px"><svg style="left:8px;top:6px" width="16" height="17" viewBox="0 0 16 17"><rect x="0.6" y="1.4" width="11" height="12.1" rx="0.5" fill="#fff" stroke="url(#bg)" stroke-width="1.2"/><path d="M2.1 3.7 V1.8 H4.2 Q4.4 0 6 0 Q7.7 0 7.9 1.8 H10 V3.7 Z" fill="#8e8e8e"/><path d="M3 2.5 H9" stroke="#c4c4c4" stroke-width="1"/><path d="M2.2 5.5 H3.2 M2.2 7.5 H3.2 M2.2 9.5 H3.2" stroke="#9fb0c0" stroke-width="1"/><path d="M4.2 5.5 H9.8 M4.2 7.5 H9.8 M4.2 9.5 H9.8" stroke="#c3cad2" stroke-width="1"/><path d="M5.9 10.9 L7.3 9.9 L9.4 12.7 L13.3 9.2 L14.9 10.2 L9.6 16 Z" fill="#22b822" stroke="#0f8f0f" stroke-width="0.5" stroke-linejoin="round"/></svg><a>Электронный счет-фактура (УПД) №8 от 23.11.2019</a><span style="left:372.6px">Счет-фактура</span><span style="left:497.7px">23.11.2019</span><span class="num" style="left:598px;width:228px">8</span><span class="num" style="left:835px;width:148px">396,50</span><span style="left:1000px;letter-spacing:0.1px">ОАО "МикроВи...</span></div>
<div class="row" style="top:408px"><svg style="left:8px;top:6px" width="16" height="17" viewBox="0 0 16 17"><rect x="0.6" y="1.4" width="11" height="12.1" rx="0.5" fill="#fff" stroke="url(#bg)" stroke-width="1.2"/><path d="M2.1 3.7 V1.8 H4.2 Q4.4 0 6 0 Q7.7 0 7.9 1.8 H10 V3.7 Z" fill="#8e8e8e"/><path d="M3 2.5 H9" stroke="#c4c4c4" stroke-width="1"/><path d="M2.2 5.5 H3.2 M2.2 7.5 H3.2 M2.2 9.5 H3.2" stroke="#9fb0c0" stroke-width="1"/><path d="M4.2 5.5 H9.8 M4.2 7.5 H9.8 M4.2 9.5 H9.8" stroke="#c3cad2" stroke-width="1"/><path d="M5.9 10.9 L7.3 9.9 L9.4 12.7 L13.3 9.2 L14.9 10.2 L9.6 16 Z" fill="#22b822" stroke="#0f8f0f" stroke-width="0.5" stroke-linejoin="round"/></svg><a>Электронный счет-фактура (УПД) №9 от 25.11.2019</a><span style="left:372.6px">Счет-фактура</span><span style="left:497.7px">25.11.2019</span><span class="num" style="left:598px;width:228px">9</span><span class="num" style="left:835px;width:148px">396,50</span><span style="left:1000px;letter-spacing:0.1px">ОАО "МикроВи...</span></div>
<div class="row odd" style="top:437px;background:#fff"><span style="left:0;width:1101px;height:27px;background:#fdf1c9"></span><span style="left:365px;width:1px;height:27px;background:#fff"></span><span style="left:490px;width:1px;height:27px;background:#fff"></span><span style="left:597px;width:1px;height:27px;background:#fff"></span><span style="left:835px;width:1px;height:27px;background:#fff"></span><span style="left:992px;width:1px;height:27px;background:#fff"></span><span style="left:365px;top:1px;width:124px;height:26px;background:#fde58f;border:2px solid #f5c632"></span><svg style="left:8px;top:6px" width="16" height="17" viewBox="0 0 16 17"><rect x="0.6" y="1.4" width="11" height="12.1" rx="0.5" fill="#fff" stroke="url(#bg)" stroke-width="1.2"/><path d="M2.1 3.7 V1.8 H4.2 Q4.4 0 6 0 Q7.7 0 7.9 1.8 H10 V3.7 Z" fill="#8e8e8e"/><path d="M3 2.5 H9" stroke="#c4c4c4" stroke-width="1"/><path d="M2.2 5.5 H3.2 M2.2 7.5 H3.2 M2.2 9.5 H3.2" stroke="#9fb0c0" stroke-width="1"/><path d="M4.2 5.5 H9.8 M4.2 7.5 H9.8 M4.2 9.5 H9.8" stroke="#c3cad2" stroke-width="1"/><path d="M5.9 10.9 L7.3 9.9 L9.4 12.7 L13.3 9.2 L14.9 10.2 L9.6 16 Z" fill="#22b822" stroke="#0f8f0f" stroke-width="0.5" stroke-linejoin="round"/></svg><a style="letter-spacing:0.08px">Документ об отгрузке товаров (выполнении работ), ...</a><span style="left:372.6px">Товарная накла...</span><span style="left:497.7px">25.11.2019</span><span class="num" style="left:598px;width:228px">44</span><span class="num" style="left:835px;width:148px">396,50</span><span style="left:1000px;letter-spacing:0.1px">ОАО "МикроВи...</span></div>
<svg style="left:9px;top:497px" width="4" height="7" viewBox="0 0 4 7"><path d="M0 3.5 L4 0 V7 Z" fill="#c4c4c4"/></svg>
<div class="abs" style="left:24px;top:496px;width:939px;height:8px;background:#dcdcdc;border-radius:4px"></div>
<div class="abs" style="left:24px;top:496px;width:403px;height:8px;background:#9d9d9d;border-radius:4px"></div>
<svg style="left:973px;top:496px" width="4" height="7" viewBox="0 0 4 7"><path d="M4 3.5 L0 0 V7 Z" fill="#333"/></svg>
<div class="abs" style="left:1005px;top:490px;width:97px;height:22px;border:1px solid #a6a6a6;border-right:none;border-bottom:none;background:linear-gradient(90deg,transparent 48px,#fff 48px),linear-gradient(#fff,#fff 40%,#ececec)"></div>
<div class="abs" style="left:1029px;top:491px;width:1px;height:21px;background:#a6a6a6"></div>
<div class="abs" style="left:1053px;top:491px;width:1px;height:21px;background:#a6a6a6"></div>
<div class="abs" style="left:1077px;top:491px;width:1px;height:21px;background:#a6a6a6"></div>
<svg style="left:1012px;top:498px" width="10" height="7" viewBox="0 0 10 7"><path d="M0 0 H10 V1.3 H0 Z M5 1.8 L10 7 H0 Z" fill="#222"/></svg>
<svg style="left:1037px;top:499px" width="9" height="5" viewBox="0 0 9 5"><path d="M4.5 0 L9 5 H0 Z" fill="#222"/></svg>
<svg style="left:1061px;top:499px" width="9" height="5" viewBox="0 0 9 5"><path d="M4.5 5 L9 0 H0 Z" fill="#b9b9b9"/></svg>
<svg style="left:1085px;top:498px" width="10" height="7" viewBox="0 0 10 7"><path d="M0 7 H10 V5.7 H0 Z M5 5.2 L10 0 H0 Z" fill="#b9b9b9"/></svg>
</div>
<div class="abs" style="left:302px;top:228px;width:387px;height:348px;border:5px solid #ed1c24;z-index:10"></div>
<div class="abs lk" style="left:15px;top:598px;line-height:18px;letter-spacing:0.08px">Быстрый поиск (показать)</div>
<div class="abs" style="left:274px;top:593px;width:30px;height:26px;border:1px solid #c6c6c6;border-radius:3px;background:linear-gradient(#fff,#fff 50%,#ececec);box-shadow:0 1px 0 #bdbdbd"></div>
<svg style="left:281px;top:598px" width="16" height="16" viewBox="0 0 16 16"><circle cx="8" cy="8" r="7.6" fill="#b9a3a3"/><path d="M5.3 5.3 L10.7 10.7 M10.7 5.3 L5.3 10.7" stroke="#e9e1e1" stroke-width="1.6"/></svg>
<div class="abs" style="left:314px;top:604px;line-height:18px;color:#4d4d4d">Условные обозначения:</div>
<svg style="left:466px;top:605px" width="16" height="15" viewBox="0 0 16 15"><path d="M8 1.2 L15 13.2 H1 Z" fill="#f5e13c" stroke="#c4aa22" stroke-width="1.4" stroke-linejoin="round"/><path d="M8 4.4 V9.4" stroke="#2a2a10" stroke-width="1.9"/><rect x="7.1" y="10.3" width="1.8" height="1.8" fill="#2a2a10"/></svg>
<div class="abs" style="left:487px;top:604px;line-height:18px;color:#7a6a4f">- сопоставить номенклатуру</div>
<svg style="left:666px;top:605px" width="14" height="14" viewBox="0 0 14 14"><circle cx="7" cy="7" r="6.5" fill="#3db03d" stroke="#2a8f2a" stroke-width="0.9"/><path d="M7 3.3 V10.7 M3.3 7 H10.7" stroke="#fff" stroke-width="2"/></svg>
<div class="abs" style="left:686px;top:604px;line-height:18px;letter-spacing:0.1px;color:#7a6a4f">- создать учетный документ</div>
<svg style="left:864px;top:604px" width="16" height="16" viewBox="0 0 16 16"><rect x="0.5" y="0.5" width="12" height="13" fill="#fff" stroke="#8393aa"/><path d="M2 2.5 H4 M2 4.5 H5.5 M2 6.5 H5.5 M2 8.5 H6.5 M2 10.5 H6.5" stroke="#93a1b6"/><rect x="7.2" y="9.3" width="6.6" height="6.4" rx="1.6" fill="#dfbd32"/><path d="M7.7 11.5 H13.3 M7.7 13.5 H13.3" stroke="#f8ec8a" stroke-width="1"/><path d="M5.2 0.4 H9.5 Q12.6 0.4 12.8 4.5 H15.5 L10.9 9.6 L6.3 4.5 H9.3 Q9.3 3.1 8 3.1 H5.2 Z" fill="#22d07e" stroke="#0e9a50" stroke-width="0.7" stroke-linejoin="round"/></svg>
<div class="abs" style="left:885px;top:604px;line-height:18px;letter-spacing:0.06px;color:#7a6a4f">- провести учетный документ</div>
<div class="abs" style="left:1063px;top:598px;width:20px;height:24px"><svg style="left:8px;top:6px" width="16" height="17" viewBox="0 0 16 17"><rect x="0.6" y="1.4" width="11" height="12.1" rx="0.5" fill="#fff" stroke="url(#bg)" stroke-width="1.2"/><path d="M2.1 3.7 V1.8 H4.2 Q4.4 0 6 0 Q7.7 0 7.9 1.8 H10 V3.7 Z" fill="#8e8e8e"/><path d="M3 2.5 H9" stroke="#c4c4c4" stroke-width="1"/><path d="M2.2 5.5 H3.2 M2.2 7.5 H3.2 M2.2 9.5 H3.2" stroke="#9fb0c0" stroke-width="1"/><path d="M4.2 5.5 H9.8 M4.2 7.5 H9.8 M4.2 9.5 H9.8" stroke="#c3cad2" stroke-width="1"/><path d="M5.9 10.9 L7.3 9.9 L9.4 12.7 L13.3 9.2 L14.9 10.2 L9.6 16 Z" fill="#22b822" stroke="#0f8f0f" stroke-width="0.5" stroke-linejoin="round"/></svg></div>
<div class="abs" style="left:1091px;top:604px;line-height:18px;color:#7a6a4f">- действий не требуется</div>
<div class="abs" style="left:14px;top:631px;line-height:18px;letter-spacing:0.05px;color:#4d4d4d">Служба поддержки:</div>
<div class="abs" style="left:143px;top:631px;line-height:18px;font-weight:bold;font-size:12.6px;color:#222">8-800-333-9313</div>
<div class="abs" style="left:283px;top:631px;line-height:18px;font-weight:bold;font-size:12.15px;color:#222">edo@1c.ru</div>
<div class="abs lk" style="left:400px;top:631px;line-height:18px;letter-spacing:-0.1px">1С-Коннект</div>
<div class="abs lk" style="left:479px;top:631px;line-height:18px;letter-spacing:0.13px">Общее состояние ЭДО</div>
<div class="abs lk" style="left:631px;top:631px;line-height:18px;letter-spacing:0px">Настройки ЭДО</div>
<div class="abs lk" style="left:737px;top:631px;line-height:18px;letter-spacing:0.2px">Архив ЭДО</div>
<div class="abs lk" style="left:1348px;top:631px;line-height:18px;letter-spacing:0.1px">Есть идея?</div>
<svg style="left:1326px;top:632px" width="12" height="17" viewBox="0 0 12 17"><path d="M6 0.5 C2.5 0.5 0.5 3 0.5 5.8 C0.5 8.5 3 9.5 3.5 12 H8.5 C9 9.5 11.5 8.5 11.5 5.8 C11.5 3 9.5 0.5 6 0.5 Z" fill="#f9e23a" stroke="#d9b51a" stroke-width="0.8"/><rect x="3.6" y="12.3" width="4.8" height="3" rx="0.8" fill="#8a8a8a"/><rect x="4.6" y="15.2" width="2.8" height="1.3" fill="#555"/></svg>
</body></html>
